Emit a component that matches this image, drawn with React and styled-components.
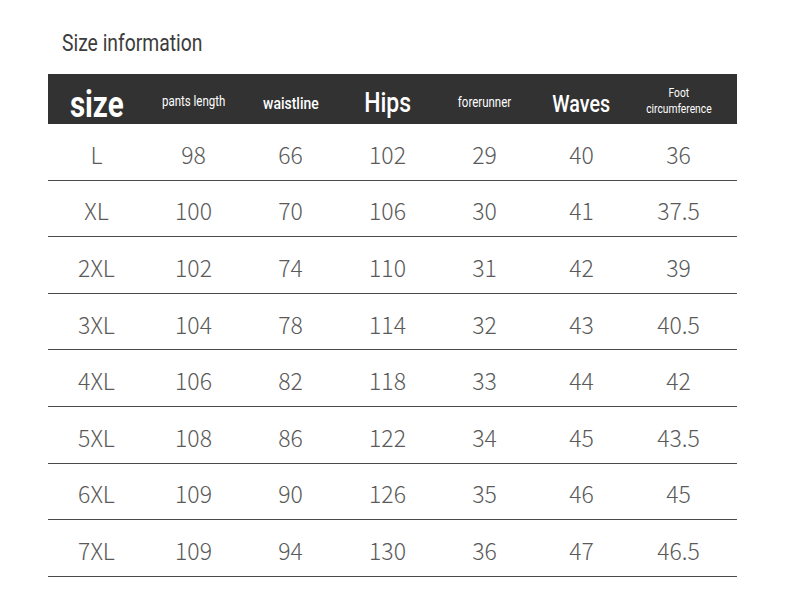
import styled, { createGlobalStyle } from "styled-components";

const GlobalStyle = createGlobalStyle`
  body {
    margin: 0;
    background: #fff;
  }
`;

const Page = styled.div`
  width: 790px;
  height: 599px;
  background: #fff;
  padding: 29px 0 0 48px;
  box-sizing: border-box;
`;

const Title = styled.h2`
  margin: 0 0 16px 14px;
  font-family: "Roboto", "Liberation Sans", sans-serif;
  font-weight: 400;
  font-size: 23px;
  line-height: 29px;
  color: #3c3c3c;
  transform: scaleX(0.84);
  transform-origin: left center;
  white-space: nowrap;
`;

const Table = styled.div`
  width: 689px;
`;

const HeaderRow = styled.div`
  display: grid;
  grid-template-columns: repeat(7, 97px) 1fr;
  height: 50px;
  background: #323232;
  color: #fff;
  font-family: "Roboto", "Liberation Sans", sans-serif;
`;

const HeadCell = styled.div`
  display: flex;
  align-items: center;
  justify-content: center;
  text-align: center;
  padding-top: ${(p) => p.drop || 0}px;
`;

const Narrow = styled.span`
  display: inline-block;
  white-space: pre-line;
  font-size: ${(p) => p.size}px;
  font-weight: ${(p) => p.weight};
  line-height: 1.3;
  transform: scaleX(0.82);
`;

const Row = styled.div`
  display: grid;
  grid-template-columns: repeat(7, 97px) 1fr;
  height: 56.6px;
  box-sizing: border-box;
  border-bottom: 1.5px solid #4a4a4a;
  font-family: "Noto Sans CJK SC", "Noto Sans", sans-serif;
  font-weight: 300;
  font-size: 23px;
  color: #5a5a5a;
`;

const Cell = styled.div`
  display: flex;
  align-items: center;
  justify-content: center;
  padding-top: 4px;
`;

const headers = [
  { label: "size", size: 36, weight: 700, drop: 8 },
  { label: "pants length", size: 14, weight: 400, drop: 0 },
  { label: "waistline", size: 17, weight: 500, drop: 4 },
  { label: "Hips", size: 28, weight: 500, drop: 4 },
  { label: "forerunner", size: 14, weight: 400, drop: 2 },
  { label: "Waves", size: 24, weight: 500, drop: 6 },
  { label: "Foot\ncircumference", size: 12.5, weight: 400, drop: 0 },
];

const rows = [
  ["L", 98, 66, 102, 29, 40, 36],
  ["XL", 100, 70, 106, 30, 41, 37.5],
  ["2XL", 102, 74, 110, 31, 42, 39],
  ["3XL", 104, 78, 114, 32, 43, 40.5],
  ["4XL", 106, 82, 118, 33, 44, 42],
  ["5XL", 108, 86, 122, 34, 45, 43.5],
  ["6XL", 109, 90, 126, 35, 46, 45],
  ["7XL", 109, 94, 130, 36, 47, 46.5],
];

export default function App() {
  return (
    <Page>
      <GlobalStyle />
      <Title>Size information</Title>
      <Table>
        <HeaderRow>
          {headers.map((h) => (
            <HeadCell key={h.label} drop={h.drop}>
              <Narrow size={h.size} weight={h.weight}>
                {h.label}
              </Narrow>
            </HeadCell>
          ))}
        </HeaderRow>
        {rows.map((r) => (
          <Row key={r[0]}>
            {r.map((v, i) => (
              <Cell key={i}>{v}</Cell>
            ))}
          </Row>
        ))}
      </Table>
    </Page>
  );
}
